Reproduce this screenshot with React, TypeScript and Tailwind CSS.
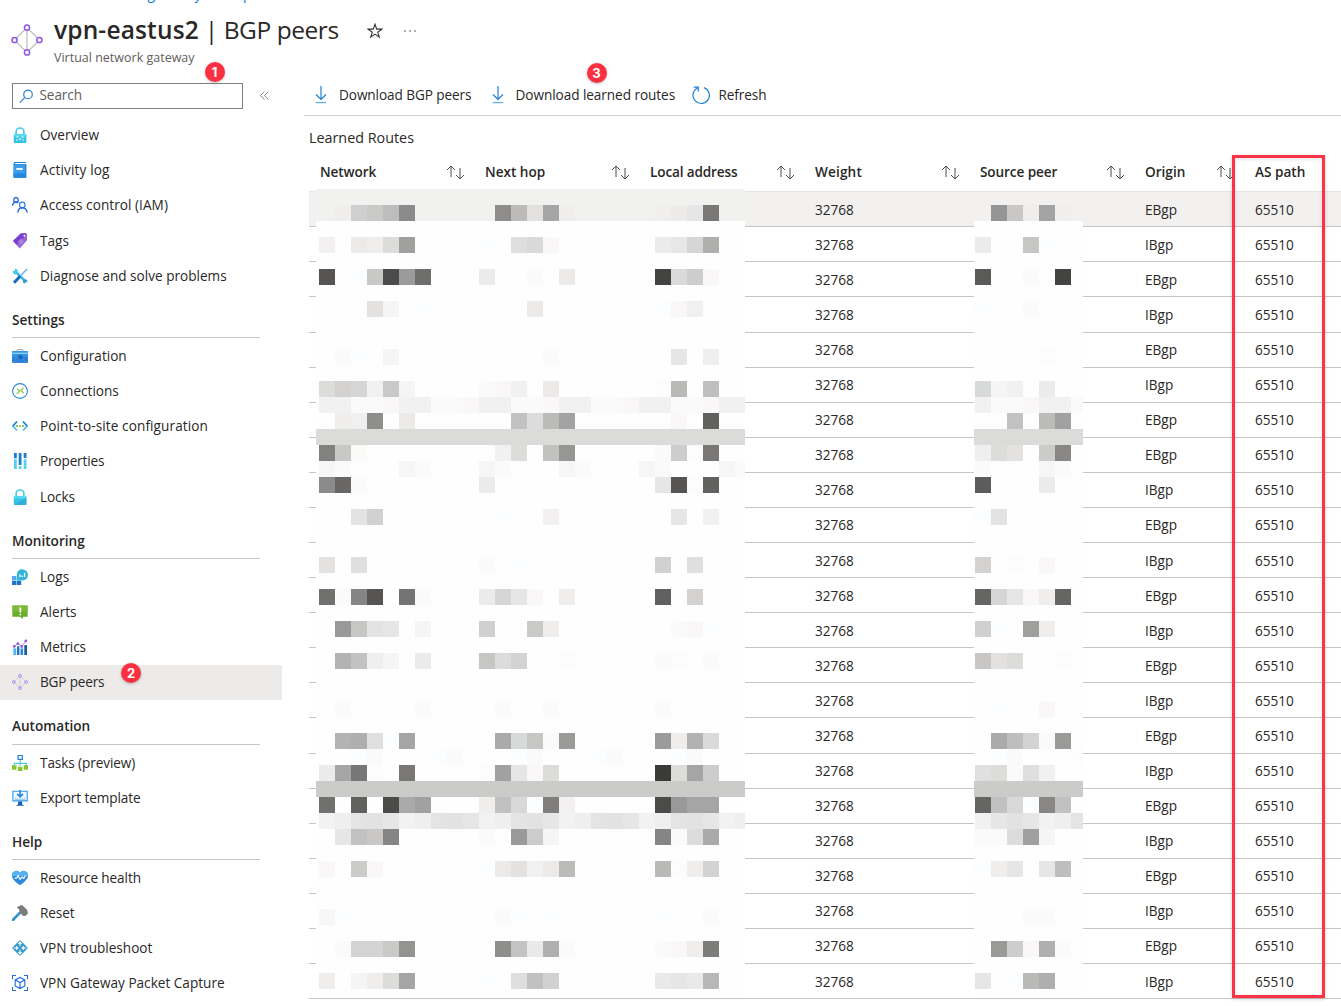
import React from "react";

const LEFT_MOSAIC: string[] = [
  "205|1 efeeed cfcfcf c9c9c8 bdbdbd 8b8b8b|11 8e8d8b bcbbb9 e2e1df a5a5a5 f0eeed|21 f0efed ecebe9 e6e6e6 797877",
  "237|0 f2f0f1|2 ebeae9 efeeed dcdcdb a0a09f|10 fbfdff|12 dededf d9d9d9 f9f7f8|21 ebebeb e7e7e7 d6d6d6 afafae",
  "269|0 565554|2 fbfdff c8c8c7 4b4b4b 9b9b9b 6e6e6d|10 ebebeb|13 fafafa|15 ebeae9|21 434342 dadada cdcdcd f9f7f8",
  "301|3 e3e2e1 f5f5f5|6 fbfdff|13 ebeae9|21 fbfdff f9f7f8 f0f0f0",
  "349|1 fafafa fbfdff|4 f5f5f5|14 fafafa|22 e6e6e6|24 efefef",
  "381|0 dcdcdb d3d2d0 d5d5d5 f1f1f1 c9c9c9 f5f5f5|10 fafafa f9f7f8 f1f1f1|14 ebeae9|21 fcfcfc b9b9b8|24 bfbfbf",
  "397|0 f1f1f1 f1f1f1 fafafa fafafa f9f7f8 f1f1f1 f1f1f1 fafafa fafafa f9f7f8 f1f1f1 f1f1f1 fafafa fafafa f9f7f8 f1f1f1 f1f1f1 fafafa fafafa f9f7f8 f1f1f1 f1f1f1 fafafa fafafa f9f7f8 f1f1f1 f1f1f1",
  "413|1 efeeed f0f0f0 8e8e8d|5 ebeae9|12 c2c2c2 dcdcdc bbbbba a2a2a2|22 f9f7f8|24 61615f",
  "445|0 81817f c8c8c7 fafaf9|11 f1f1f1 dcdcdb|14 c1c1c0 969695|21 fafafa cdcdcd fcfcfc 797877",
  "461|0 f6f6f6 fafafa|5 f6f6f6 fafafa|10 f6f6f6 fafafa|15 f6f6f6 fafafa|20 f6f6f6 fafafa|25 f6f6f6 fafafa",
  "477|0 8b8b8b 686766 fafafa|10 ebebeb|21 e6e6e6 565553 fcfcfc 61615f",
  "509|2 e3e3e3 d1d1d1|11 fbfdff|14 f2f0f1|22 e6e6e6|24 f1f1f1",
  "557|0 e3e2e1|2 dfdfdf|10 fafafa|12 fbfdff|21 d1d1d1|23 dfdfdf",
  "589|0 70706f fafafa 858585 565553|5 747474 fafafa|10 ebebeb d6d6d6 e6e6e6 f9f7f8|15 efeeed|21 606060|23 d3d2d0",
  "621|1 999999 c6c6c5 e3e3e3 e6e6e6|6 f5f5f5|10 d0d0d0|13 c9c9c8 efeeed|22 fafafa f9f7f8 fbfdff",
  "653|1 b3b3b3 c2c2c2 efefef f5f5f5|6 ebebeb|10 c6c6c5 dcdcdc d3d3d3|15 fcfcfc|21 fafafa fcfcfc|24 fafafa",
  "701|1 fafafa|6 fafafa|11 fafafa|14 fafafa|21 fafafa",
  "733|1 b3b3b3 afafaf e0e0e0 fbfdff a5a5a5|11 aaaaaa d8dada c6c6c5 fafafa 9a9a99|21 9b9b9b efeeed b2b2b2 dadada",
  "749|2 fbfdff fafafa|7 fbfdff fafafa|12 fbfdff fafafa|17 fbfdff fafafa|22 fbfdff fafafa",
  "765|0 ebebeb a5a5a5 777777 fcfcfc|5 797877|10 fcfcfc a1a1a1 e6e6e6 f9f7f8 dcdcdb|21 3a3a39 dcdcdb a5a5a5 cdcdcd",
  "797|0 70706f|2 61615f|4 4b4b4a aaaaaa a1a1a1|10 efeeed c1c1c1 d8d8d8 fbfdff 7f7e7d f2f0f1|21 4b4b4a 999999 a5a5a5 a5a5a5",
  "813|0 f2f2f2 efefef e4e4e4 e2e2e2 e6e6e6 f2f2f2 efefef e4e4e4 e2e2e2 e6e6e6 f2f2f2 efefef e4e4e4 e2e2e2 e6e6e6 f2f2f2 efefef e4e4e4 e2e2e2 e6e6e6 f2f2f2 efefef e4e4e4 e2e2e2 e6e6e6 f2f2f2 efefef",
  "829|1 e6e6e6 c2c2c2 c9c8c7 858585|10 fafafa|12 9a9a9a cccccc f5f5f5|21 858585 fafafa dcdcdc aaaaaa",
  "861|0 f9f7f8|2 cbcbca f9f7f8|10 fbfdff ebeae9 e3e2e1 f1f1f1 ebeae9 bbbbba|21 b9b9b8 fcfcfc efeeed d3d3d3",
  "909|0 f7f7f7 fbfdff|11 fafafa fbfdff|14 fbfdff|21 fbfdff|24 fafafa",
  "941|1 fafafa d4d4d4 d4d4d4 c9c9c8 939392|11 8e8e8d c3c3c3 e9e9e9 b0b0b0 fafafa|21 fafafa f9f7f8 efeeed 7c7c7b",
  "973|0 efeeed|2 f5f5f5 efeeed dcdcdb a5a5a5|10 fbfdff|12 dedede c1c1c1 d1d1d1|21 e9e9e9 e6e6e6 e9e9e9 b7b7b7",
];

const RIGHT_MOSAIC: string[] = [
  "205|1 959595 c9c8c7 efeeed a4a4a4 f0efee",
  "237|0 ebebeb|3 c6c6c5 fbfdff",
  "269|0 5a5a58|3 fafafa|5 434342",
  "301|0 fbfdff|3 fafafa",
  "349|4 fcfcfc",
  "381|0 d8dada f5f5f5 f1f1f1|4 ebebeb",
  "397|0 f1f1f1 fafafa fafafa f9f7f8 f1f1f1 f1f1f1 fafafa",
  "413|2 c2c2c2|4 bbbbba a1a1a1",
  "445|0 efefef dcdcdb e3e2e1|4 cbcbca 888785",
  "461|0 fafafa|4 f6f6f6 fafafa",
  "477|0 5c5c5c|4 ebebeb",
  "509|0 fbfdff e3e3e3",
  "557|0 d3d2d1|2 fcfcfc|4 f9f7f8",
  "589|0 656563 d5d5d5 e6e6e6 f9f7f8 efeeed 656563",
  "621|0 d0d0d0 fbfdff|3 9f9f9e efeeed",
  "653|0 c8c7c6 e2e1e0 dcdcdb|5 fcfcfc",
  "701|1 fbfdff|4 f9f7f8",
  "733|1 aaaaaa bebebe d3d3d3 fafafa 9a9a99",
  "749|1 fbfdff fafafa|6 fbfdff",
  "765|0 e0e0e0 dcdcdb fafafa dfdfdf f1f1f1",
  "797|0 656563 c1c1c1 d8d8d8 fbfdff 888785 c1c1c1",
  "813|0 f1f1f1 e6e6e6 e2e2e2 e6e6e6 f2f2f2 efefef e4e4e4",
  "829|0 fafafa fafafa dcdcdc a0a0a0 f5f5f5",
  "861|0 fbfdff efeeed e6e6e6|4 e6e6e6 bebebe",
  "909|3 fafafa fafafa",
  "941|1 999998 cdcdcd f9f7f8 afafaf fafafa",
  "973|0 e6e6e6|2 fbfdff b9b9b8 afafaf",
];

/* Redaction overlay: a 16px checker of averaged colours. */
function Mosaic({ rows }: { rows: string[] }) {
  return (
    <div className="h-full w-full overflow-hidden">
      <div className="grid auto-rows-[16px] grid-cols-[repeat(27,16px)]">
        {rows.flatMap((row) => {
          const [y, ...runs] = row.split("|");
          const line = (Number(y) - 189) / 16 + 1;
          return runs.flatMap((run) => {
            const [start, ...colors] = run.split(" ");
            return colors.map((c, i) => (
              <div
                key={y + "-" + start + "-" + i}
                style={{ gridRow: line, gridColumn: Number(start) + i + 1, backgroundColor: "#" + c }}
              />
            ));
          });
        })}
      </div>
    </div>
  );
}

const Svg = ({ children, size = 16 }: { children: React.ReactNode; size?: number }) => (
  <svg width={size} height={size} viewBox="0 0 16 16" fill="none" className="shrink-0">
    {children}
  </svg>
);

const BgpIcon = ({ size = 16, line = "#c4c4c4" }: { size?: number; line?: string }) => (
  <Svg size={size}>
    <path d="M8 1.8 14.2 8 8 14.2 1.8 8ZM8 2v12" stroke={line} strokeWidth=".7" />
    {[[8, 1.8], [14.2, 8], [8, 14.2], [1.8, 8]].map(([x, y]) => (
      <circle key={x + "," + y} cx={x} cy={y} r="1.3" fill="#fff" stroke="#8f55e6" strokeWidth=".75" />
    ))}
  </Svg>
);

const LockIcon = ({ dots = false }: { dots?: boolean }) => (
  <Svg>
    <path d="M4.1 8V4.9a3.9 3.9 0 0 1 7.8 0V8" stroke="#45cdea" strokeWidth="1.7" />
    <rect x="1.8" y="7.3" width="12.6" height="8.7" rx=".7" fill="#35c3e6" />
    <path d="M1.8 9.5V8c0-.5.3-.7.7-.7h11.2c.4 0 .7.2.7.7v1.5Z" fill="#58dcf3" />
    {dots ? (
      <path d="M4.5 10h2M9.5 10h2M6.8 13l2.4-1.8M4 13.2h1.5M10.5 13.2H12" stroke="#d7f8ff" strokeWidth="1.3" />
    ) : (
      <path d="M2 16 14.4 9v6.3c0 .4-.3.7-.7.7Z" fill="#2eb0d8" />
    )}
  </Svg>
);

const icons: Record<string, React.ReactNode> = {
  overview: <LockIcon dots />,
  log: (
    <Svg>
      <path d="M2 1c0-.5.4-.9.9-.9h11.2v15.7H2Z" fill="#1f7cd0" />
      <path d="M3.2 1h11v1h-11Z" fill="#fff" />
      <path d="M2.9 2.5h10.7v12H2.3c-.5 0-1-.4-1-.9V1.2Z" fill="#3c9de8" />
      <path d="M1.3 11.5h12.3v4.2H2.3c-.5 0-1-.4-1-1Z" fill="#2388df" />
      <rect x="4.3" y="6" width="6.3" height="2" fill="#e9f6ff" />
      <path d="M14 2v13.7" stroke="#2877bd" strokeWidth=".7" />
    </Svg>
  ),
  iam: (
    <Svg>
      <g stroke="#1b63dc" strokeWidth="1.25">
        <circle cx="4" cy="2.9" r="2.3" />
        <path d="M.5 8.8c0-2 1.4-3.6 3.5-3.6.9 0 1.6.3 2.1.8" />
        <circle cx="10.3" cy="7.9" r="2.8" stroke="#2a85e8" />
        <path d="M5.8 15.6c.2-2.8 2-4.8 4.5-4.8s4.5 1.8 5 4.8" />
      </g>
    </Svg>
  ),
  tags: (
    <Svg>
      <path d="M1 8 8.7.5 13.6.3l1.4 1.2v5.8l-7.3 8.3Z" fill="#9766d4" />
      <path d="M1 8 8.7.5 13.6.3l1.4 1.2L4.5 11.6Z" fill="#7a3fd0" />
      <path d="m6 8.4 3.2-3 3 3-3.2 3.4Z" fill="#a982dd" />
      <circle cx="12.5" cy="2.8" r="1" fill="#fff" />
    </Svg>
  ),
  diagnose: (
    <Svg>
      <path d="m4.3 4.3 8.6 8.6" stroke="#38b5dd" strokeWidth="2.4" />
      <path d="M5.8 3.8A2.9 2.9 0 0 0 2.8.7v2.4L.9 3A2.9 2.9 0 0 0 4 6.5" fill="#45c9ea" />
      <path d="M13 11.3a2.4 2.4 0 0 1 2.4 2.9l-1.7-.5-.4 1.9a2.6 2.6 0 0 1-2.4-3" fill="#2c99cf" />
      <path d="M15 1 7.8 8.6" stroke="#6ab2e6" strokeWidth="1.5" />
      <path d="M8.2 8.2 2 14.7" stroke="#1668b8" strokeWidth="3" />
    </Svg>
  ),
  config: (
    <Svg>
      <path d="M5.1 3.5V1.6h5.8v1.9" stroke="#aaa" strokeWidth="1" />
      <rect y="3" width="16" height="11.7" rx=".6" fill="#3294e4" />
      <path d="M0 4.6h16v1.4H0Z" fill="#8ad0f9" />
      <path d="M0 9h16v5.1c0 .4-.2.6-.6.6H.6c-.4 0-.6-.2-.6-.6Z" fill="#2b7fd4" />
      <path d="M5.7 7.5h4.7v3H5.7Z" fill="#1a5fb0" />
      <path d="m1.5 14.5 2-5h3l-3 5M13 14l-1.8-4" stroke="#3f96df" strokeWidth=".8" />
    </Svg>
  ),
  connections: (
    <Svg>
      <circle cx="8" cy="8" r="7.4" stroke="#2c87de" strokeWidth="1.1" />
      <path d="m4.8 5.6 2.8 2.7-2.8 2.8" stroke="#84bd3c" strokeWidth="1.1" />
      <path d="M11.6 4.6 8.9 7.3l2.7 2.7" stroke="#84bd3c" strokeWidth="1.1" />
    </Svg>
  ),
  p2s: (
    <Svg>
      <path d="M5 3.5.9 8 5 12.5M11 3.5 15.1 8 11 12.5" stroke="#48bdea" strokeWidth="1.6" />
      <path d="M5 3.5.9 8M11 3.5 15.1 8" stroke="#2185d9" strokeWidth="1.6" />
      <circle cx="5" cy="8" r="1" fill="#79b52f" />
      <circle cx="8" cy="8" r="1" fill="#79b52f" />
      <circle cx="11" cy="8" r="1" fill="#79b52f" />
    </Svg>
  ),
  properties: (
    <Svg>
      <path d="M2 0h2.8v5.2H2ZM6.7 0h2.8v12H6.7ZM11.7 0h2.8v5H11.7Z" fill="#207bd0" />
      <path d="M2 6.3h2.8V16H2ZM6.7 13.2h2.8V16H6.7ZM11.7 6.3h2.8V16H11.7Z" fill="#54d1ed" />
    </Svg>
  ),
  locks: <LockIcon />,
  logs: (
    <Svg>
      <path d="M0 7h4.4v4.2H0Z" fill="#55a9ef" />
      <path d="M0 11.7h4.4V16H0ZM4.9 11.7h4.3V16H4.9Z" fill="#1c73c9" />
      <path d="M4.9 7h4.3v4.2H4.9Z" fill="#3a92df" />
      <path d="M10.2.2a5.7 5.7 0 1 1-1 11.3H4.9V5A5.6 5.6 0 0 1 10.2.2Z" fill="#35b5d8" />
      <path d="M8 5.5V8M10.2 6.5V8M12.6 3.8V8" stroke="#fff" strokeWidth="1.3" />
    </Svg>
  ),
  alerts: (
    <Svg>
      <path d="M.4 1.6h15.2v11.1H11v2.4l-3-2.4H.4Z" fill="#68ad29" />
      <path d="M.4 1.6h15.2v6H.4Z" fill="#7cba37" />
      <path d="M8.3 3.5v5M8.3 9.7v1.6" stroke="#fff" strokeWidth="1.7" />
    </Svg>
  ),
  metrics: (
    <Svg>
      <path d="M1.3 9.3H4V16H1.3Z" fill="#55b5ef" />
      <path d="M4.9 7.3h2.5V16H4.9Z" fill="#1c75ca" />
      <path d="M8.5 9.5h2.6V16H8.5Z" fill="#2a89da" />
      <path d="M12.3 6.1H15V16h-2.7Z" fill="#1459a1" />
      <path d="m2.3 7.5 3.6-3 4 3L13.8 2" stroke="#a578dc" strokeWidth=".9" />
      {[[2.3, 7.4], [5.9, 4.6], [9.8, 7.5], [13.8, 2]].map(([x, y]) => (
        <circle key={x} cx={x} cy={y} r="1.4" fill="#9158db" />
      ))}
    </Svg>
  ),
  bgp: <BgpIcon />,
  tasks: (
    <Svg>
      <path d="M8.2 5v6M2.3 11V8.3h12V11" stroke="#55c8ea" strokeWidth="1.2" />
      <path d="M6.1.4h4.2v4H6.1Z" fill="#fff" stroke="#217fd7" strokeWidth="1.2" />
      <path d="M0 10.3h4.5v4.4H0ZM5.9 11.8h4.5V16H5.9ZM11.7 10.3H16v4.4h-4.3Z" fill="#86c530" />
    </Svg>
  ),
  export: (
    <Svg>
      <path d="M.9 1.3h14.3v9.6H.9Z" fill="#eff9ff" stroke="#3296e2" strokeWidth="1.1" />
      <path d="M8.1 0v6.4M5.2 3.9l2.9 2.9L11 3.9" stroke="#2c86d8" strokeWidth="1.6" />
      <path d="M3.3 7.8v1.4h9.5V7.8" stroke="#6bbaf0" strokeWidth=".9" />
      <path d="M6.1 11.4h4v2.8l2.2 1.6H4l2.1-1.6Z" fill="#175ca9" />
    </Svg>
  ),
  health: (
    <Svg>
      <path d="M8 15.2C6 13.6 0 9.8 0 5.4A4.3 4.3 0 0 1 8 3a4.3 4.3 0 0 1 8 2.4c0 4.4-6 8.2-8 9.8Z" fill="#2a88da" />
      <path d="M.1 6A4.3 4.3 0 0 1 8 3a4.3 4.3 0 0 1 7.9 3Z" fill="#56b2ee" />
      <path d="M2.5 8.2h2L6.1 5.6l2 3.9L10 7l1.8 1.3 1.7-2.8" stroke="#fff" strokeWidth="1.2" />
    </Svg>
  ),
  reset: (
    <Svg>
      <path d="m1.1 14.8 8.7-8.9" stroke="#3892c4" strokeWidth="2.7" strokeLinecap="round" />
      <path d="m4.8 2.6 3.4-2.2h2.2l4.7 4.5.9 3.6-2.9 2.6-2.4-.3L8 7.4l-1-3.2Z" fill="#7b7b7b" />
      <path d="M8.2.4h2.2l4.7 4.5" stroke="#aaa" strokeWidth=".8" />
    </Svg>
  ),
  trouble: (
    <Svg>
      <rect x="2.3" y="2.3" width="11.4" height="11.4" rx="1.1" transform="rotate(45 8 8)" fill="#3b9bc8" />
      <path d="M8 2.2v4M6.4 3.8 8 2.1l1.6 1.7M8 13.8v-4M6.4 12.2 8 13.9l1.6-1.7M1.7 8h4M4.2 6.4 5.9 8 4.2 9.6M14.3 8h-4M11.8 6.4 10.1 8l1.7 1.6" stroke="#fff" strokeWidth="1.05" />
    </Svg>
  ),
  capture: (
    <Svg>
      <g stroke="#1f6be0" strokeWidth="1.1">
        <path d="M.5 4V.5H4M12 .5h3.5V4M15.5 12v3.5H12M4 15.5H.5V12" />
        <path d="m8 2.4 4.8 2.5v6L8 13.6l-4.8-2.7v-6ZM3.4 5 8 7.5 12.6 5M8 7.5v6" />
      </g>
    </Svg>
  ),
};

type Entry = [string, string, string?];
const sections: { title?: string; head?: string; items: Entry[] }[] = [
  {
    items: [
      ["overview", "Overview"],
      ["log", "Activity log", "tracking-[0.15px]"],
      ["iam", "Access control (IAM)", "tracking-[0.05px]"],
      ["tags", "Tags"],
      ["diagnose", "Diagnose and solve problems"],
    ],
  },
  {
    title: "Settings",
    head: "h-[45px]",
    items: [
      ["config", "Configuration"],
      ["connections", "Connections"],
      ["p2s", "Point-to-site configuration", "tracking-[0.1px]"],
      ["properties", "Properties", "tracking-[-0.15px]"],
      ["locks", "Locks", "tracking-[-0.1px]"],
    ],
  },
  {
    title: "Monitoring",
    head: "h-[44.7px]",
    items: [
      ["logs", "Logs"],
      ["alerts", "Alerts"],
      ["metrics", "Metrics", "tracking-[-0.1px]"],
      ["bgp", "BGP peers", "tracking-[-0.18px]"],
    ],
  },
  {
    title: "Automation",
    head: "h-[45.5px]",
    items: [
      ["tasks", "Tasks (preview)", "tracking-[-0.1px]"],
      ["export", "Export template", "tracking-[-0.1px]"],
    ],
  },
  {
    title: "Help",
    head: "h-[44.6px]",
    items: [
      ["health", "Resource health", "tracking-[-0.1px]"],
      ["reset", "Reset", "tracking-[-0.1px]"],
      ["trouble", "VPN troubleshoot"],
      ["capture", "VPN Gateway Packet Capture"],
    ],
  },
];

const Badge = ({ n, at }: { n: number; at: string }) => (
  <span
    className={
      "absolute z-20 flex size-5 items-center justify-center rounded-full bg-[#fb3142] font-['Inter',sans-serif] text-[13px] font-bold text-white shadow-[0_1px_3px_rgba(0,0,0,0.25)] " +
      at
    }
  >
    {n}
  </span>
);

const SortIcon = () => (
  <svg width="19" height="16" viewBox="0 0 19 16" fill="none" stroke="#4a4a4a" strokeWidth="1">
    <path d="M5 13V2M1 6l4-4 4 4M14 4v11M10 11l4 4 4-4" />
  </svg>
);

const DownloadIcon = () => (
  <svg width="12" height="18" viewBox="0 0 12 18" fill="none" stroke="#1b7fd9">
    <path d="M6 0v13.3M1 8.5l5 5 5-5" strokeWidth="1.2" />
    <path d="M.7 16.6h10.4" strokeWidth="1.2" stroke="#5caeea" />
  </svg>
);

const columns: [string, string, boolean][] = [
  ["Network", "w-[165px] tracking-[-0.1px]", true],
  ["Next hop", "w-[165px]", true],
  ["Local address", "w-[165px] tracking-[-0.15px]", true],
  ["Weight", "w-[165px] tracking-[0.15px]", true],
  ["Source peer", "w-[165px] tracking-[-0.1px]", true],
  ["Origin", "w-[110px]", true],
  ["AS path", "w-[90px]", false],
];

const origins = "EIEIEIEEIEIEIEIEIEIEIEI".split("");
const lowered = [0, 1, 2, 10, 11, 12, 13, 14, 22];

export default function App() {
  return (
    <div className="relative flex h-[1006px] w-[1341px] flex-col overflow-hidden bg-white font-['Open_Sans','Noto_Sans',sans-serif] text-[13.6px] leading-5 text-[#292827]">
      <nav className="flex h-1 items-end pl-[11px] text-[14px] text-[#0f7bd8]">
        <span className="h-5 w-[33px] whitespace-nowrap">…</span>
        <span className="h-5 w-[192px] whitespace-nowrap">Virtual network gateways</span>
        <span className="h-5 whitespace-nowrap">vpn-eastus2</span>
      </nav>

      <header className="flex h-[76px] shrink-0 pl-[11px] pt-2">
        <div className="pt-3">
          <BgpIcon size={32} />
        </div>
        <div className="ml-[11px]">
          <div className="flex h-9 items-center">
            <h1 className="whitespace-nowrap text-[24.5px] leading-9 tracking-[-0.45px]">
              <span className="font-semibold tracking-[0.15px]">vpn-eastus2</span> | BGP peers
            </h1>
            <svg width="16" height="16" viewBox="0 0 16 16" fill="none" stroke="#333" strokeWidth="1.1" className="ml-7 mt-0.5">
              <path d="m8 1.2 1.7 4.9h5.2l-4.2 3.1 1.6 5L8 11.1l-4.3 3.1 1.6-5L1.1 6.1h5.2Z" />
            </svg>
            <svg width="14" height="4" viewBox="0 0 14 4" fill="#444" className="ml-5 mt-0.5">
              <circle cx="2" cy="2" r=".8" />
              <circle cx="7" cy="2" r=".8" />
              <circle cx="12" cy="2" r=".8" />
            </svg>
          </div>
          <p className="text-[12.5px] leading-[19px] text-[#5f5e5c]">Virtual network gateway</p>
        </div>
      </header>

      <div className="flex flex-1">
        <aside className="w-[304px] shrink-0">
          <div className="flex h-[37.4px] pl-3 pt-[3px]">
            <div className="flex h-[26px] w-[231px] items-center border border-[#7f7e7c] pl-1.5 text-[#5f5e5c]">
              <svg width="15" height="15" viewBox="0 0 15 15" fill="none" stroke="#2a85d8" strokeWidth="1.2">
                <circle cx="9" cy="5.4" r="4.3" />
                <path d="M6 8.4.8 13.6" />
              </svg>
              <span className="ml-[5.5px] pb-0.5 tracking-[-0.1px]">Search</span>
            </div>
            <svg width="9" height="9" viewBox="0 0 9 9" fill="none" stroke="#777" strokeWidth=".9" className="ml-[17px] mt-[8px]">
              <path d="M4.3.5.5 4.5l3.8 4M8.3.5l-3.8 4 3.8 4" />
            </svg>
          </div>
          {sections.map((s) => (
            <section key={s.title ?? "top"}>
              {s.title && (
                <h2 className={"ml-3 w-[248px] border-b border-[#c8c6c4] pt-[16.5px] font-semibold " + s.head}>{s.title}</h2>
              )}
              {s.items.map(([icon, label, tracking]) => (
                <div
                  key={label}
                  className={
                    "flex h-[35.2px] w-[282px] items-center whitespace-nowrap pl-3 " + (icon === "bgp" ? "bg-[#edebea]" : "")
                  }
                >
                  {icons[icon]}
                  <span className={"ml-3 " + (tracking ?? "")}>{label}</span>
                </div>
              ))}
            </section>
          ))}
        </aside>

        <main className="relative min-w-0 flex-1">
          <div className="flex h-9 items-center border-b border-[#d2d0ce] pb-[5px] pl-[11px]">
            <DownloadIcon />
            <span className="ml-3 w-[153px] whitespace-nowrap tracking-[-0.08px]">Download BGP peers</span>
            <DownloadIcon />
            <span className="ml-[11.5px] w-[176px] whitespace-nowrap tracking-[-0.06px]">Download learned routes</span>
            <svg width="18" height="19" viewBox="0 0 18 19" fill="none" stroke="#1b7fd9" strokeWidth="1.2">
              <path d="M12 1.6A8.2 8.2 0 1 1 5.4 2M1.8 1.2h4.5v4.4" />
            </svg>
            <span className="ml-[9px] tracking-[-0.1px]">Refresh</span>
          </div>
          <h3 className="h-[37px] pl-[5px] pt-3 text-[14.35px]">Learned Routes</h3>
          <div className="ml-[5px]">
            <div className="flex h-[39px] items-center overflow-hidden border-b border-[#e6e5e4] font-semibold">
              {columns.map(([name, width, sort]) => (
                <div key={name} className={"flex shrink-0 items-center justify-between whitespace-nowrap pl-[11px] pr-[9px] " + width}>
                  {name}
                  {sort && <SortIcon />}
                </div>
              ))}
            </div>
            {origins.map((origin, i) => (
              <div
                key={i}
                className={
                  "flex items-center border-b border-[#c8c6c4] " +
                  (i === 3 || i === 15 ? "h-9 " : "h-[35px] ") +
                  (lowered.includes(i) ? "pt-0.5 " : "") +
                  (i === 0 ? "bg-[#f2f1f0]" : "")
                }
              >
                <span className="ml-[506px] w-[330px]">32768</span>
                <span className="w-[110px]">{origin}Bgp</span>
                <span>65510</span>
              </div>
            ))}
          </div>

          {/* redacted cells */}
          <div className="absolute left-[12px] top-[109px] flex h-[808px] w-[429px] flex-col bg-[#fefefe]">
            <div className="h-8 bg-[#f1f1ef]" />
            <div className="mt-[208px] h-4 bg-[#dbdbd9]" />
            <div className="mt-[336px] h-4 bg-[#cbcbc9]" />
          </div>
          <div className="absolute left-[15px] top-[109px] h-[808px] w-[426px]">
            <Mosaic rows={LEFT_MOSAIC} />
          </div>
          <div className="absolute left-[670px] top-[141px] flex h-[776px] w-[109px] flex-col bg-[#fefefe]">
            <div className="mt-[288px] h-4 -translate-y-20 bg-[#dbdbd9]" />
            <div className="mt-[256px] h-4 bg-[#cbcbc9]" />
          </div>
          <div className="absolute left-[671px] top-[109px] h-[808px] w-[108px]">
            <Mosaic rows={RIGHT_MOSAIC} />
          </div>

          {/* highlight around the AS path column */}
          <div className="absolute left-[928px] top-[75px] h-[843px] w-[93px] border-[3px] border-[#fb3344] shadow-[0_1px_4px_rgba(0,0,0,0.18),inset_0_1px_4px_rgba(0,0,0,0.12)]" />
        </main>
      </div>

      <Badge n={1} at="left-[204.5px] top-[62px]" />
      <Badge n={2} at="left-[121px] top-[663px]" />
      <Badge n={3} at="left-[586.5px] top-[62.5px]" />
    </div>
  );
}
